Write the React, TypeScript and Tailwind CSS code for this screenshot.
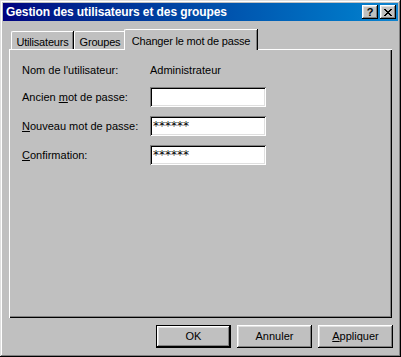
import React from "react";

const raised =
  "shadow-[inset_-1px_-1px_#000,inset_1px_1px_#fff,inset_-2px_-2px_#808080,inset_2px_2px_#dfdfdf]";
const sunken =
  "shadow-[inset_1px_1px_#808080,inset_-1px_-1px_#fff,inset_2px_2px_#000,inset_-2px_-2px_#dfdfdf]";

function TitleButton({ children }: { children: React.ReactNode }) {
  return (
    <div className={`w-[16px] h-[14px] bg-[#c0c0c0] flex items-center justify-center ${raised}`}>
      {children}
    </div>
  );
}

function Tab({ label, active, width }: { label: string; active?: boolean; width: string }) {
  if (active) {
    return (
      <div
        className={`relative z-10 -mx-[2px] mb-[-1px] h-[21px] ${width} pt-[3px] text-center bg-[#c0c0c0] border-l border-t border-white rounded-tl-[2px] shadow-[inset_-1px_0_#808080,1px_0_#000] text-[11px] tracking-[-0.2px] text-black`}
      >
        {label}
      </div>
    );
  }
  return (
    <div
      className={`h-[18px] ${width} pt-[2px] text-center border-l border-t border-white rounded-tl-[2px] shadow-[inset_-1px_0_#808080,1px_0_#000] text-[11px] tracking-[-0.2px] text-black mr-px`}
    >
      {label}
    </div>
  );
}

function Field({ value }: { value?: string }) {
  return (
    <div
      className={`w-[116px] h-[20px] bg-white pl-[3px] pt-[4px] text-[12px] leading-[12px] text-black ${sunken}`}
      style={{ fontFamily: '"DejaVu Sans", sans-serif' }}
    >
      {value}
    </div>
  );
}

function Button({ children, def }: { children: React.ReactNode; def?: boolean }) {
  return (
    <div
      className={`w-[75px] h-[23px] bg-[#c0c0c0] flex items-center justify-center text-[11px] text-black ${
        def ? "border border-black " + raised : raised
      }`}
    >
      {children}
    </div>
  );
}

export default function App() {
  return (
    <div
      className="w-[401px] h-[357px] bg-[#c0c0c0] p-[3px] flex flex-col shadow-[inset_-1px_-1px_#000,inset_1px_1px_#dfdfdf,inset_-2px_-2px_#808080,inset_2px_2px_#fff]"
      style={{ fontFamily: '"Liberation Sans", Arial, sans-serif' }}
    >
      {/* title bar */}
      <div className="h-[18px] bg-gradient-to-r from-[#000080] to-[#1084d0] flex items-center pl-[3px] pr-[2px]">
        <span className="text-white font-bold text-[12px] tracking-[-0.1px] leading-none flex-1">
          Gestion des utilisateurs et des groupes
        </span>
        <div className="flex gap-[2px]">
          <TitleButton>
            <span className="font-bold text-[11px] leading-none text-black">?</span>
          </TitleButton>
          <TitleButton>
            <svg width="8" height="7" viewBox="0 0 8 7">
              <path d="M0 0h2v1h1v1h2V1h1V0h2v1H7v1H6v1H5v1h1v1h1v1h1v1H6V6H5V5H3v1H2v1H0V6h1V5h1V4h1V3H2V2H1V1H0z" fill="#000" />
            </svg>
          </TitleButton>
        </div>
      </div>

      {/* tabs */}
      <div className="mt-[8px] ml-[6px] flex items-end h-[20px] pl-[2px]">
        <Tab label="Utilisateurs" width="w-[62px]" />
        <Tab label="Groupes" width="w-[51px]" />
        <Tab label="Changer le mot de passe" width="w-[133px]" active />
      </div>

      {/* panel */}
      <div className="ml-[6px] mr-[6px] h-[269px] border-l border-t border-white shadow-[inset_-1px_-1px_#000,inset_-2px_-2px_#808080] pl-[12px] pt-[13px] text-[11px] text-black">
        <div className="flex items-center h-[14px]">
          <span className="w-[128px]">Nom de l'utilisateur:</span>
          <span>Administrateur</span>
        </div>
        <div className="flex flex-col gap-[9px] mt-[10px]">
          <div className="flex items-center">
            <span className="w-[128px]">
              Ancien <u>m</u>ot de passe:
            </span>
            <Field />
          </div>
          <div className="flex items-center">
            <span className="w-[128px]">
              <u>N</u>ouveau mot de passe:
            </span>
            <Field value="******" />
          </div>
          <div className="flex items-center">
            <span className="w-[128px]">
              <u>C</u>onfirmation:
            </span>
            <Field value="******" />
          </div>
        </div>
      </div>

      {/* buttons */}
      <div className="mt-[7px] mr-[5px] flex justify-end gap-[6px]">
        <Button def>OK</Button>
        <Button>Annuler</Button>
        <Button>
          <span>
            <u>A</u>ppliquer
          </span>
        </Button>
      </div>
    </div>
  );
}
